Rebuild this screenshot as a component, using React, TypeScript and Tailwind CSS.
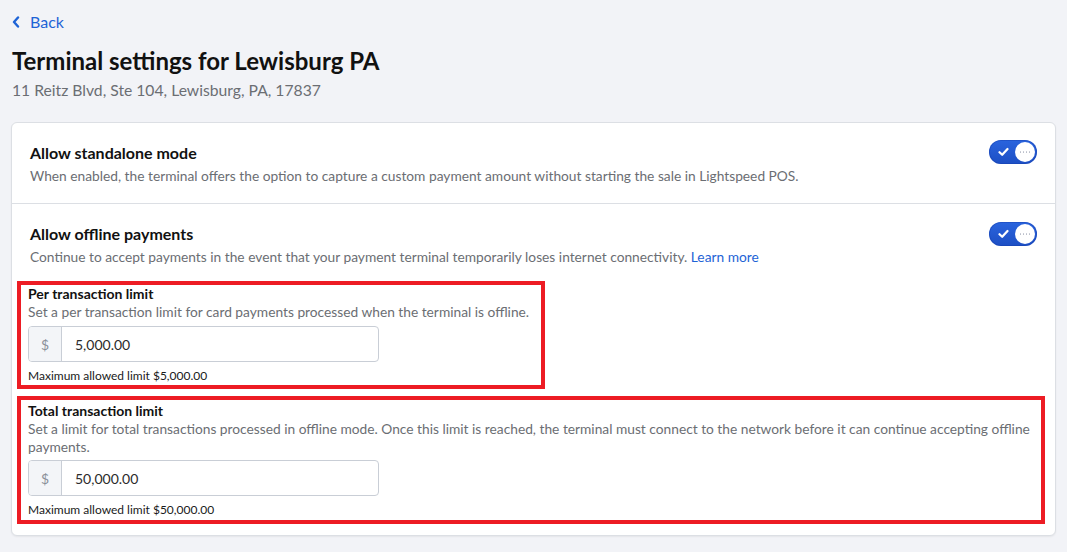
import React from "react";

function Toggle() {
  return (
    <div className="relative h-[24px] w-[48px] shrink-0 rounded-full bg-gradient-to-b from-[#2a64de] to-[#1d4fc4] shadow-[inset_0_0_0_1px_rgba(20,60,170,0.4)]">
      <svg className="absolute left-[9px] top-[7px]" width="11" height="10" viewBox="0 0 11 10" fill="none">
        <path d="M1.5 5.2L4.2 7.8L9.5 2" stroke="white" strokeWidth="2.2" strokeLinecap="round" strokeLinejoin="round" />
      </svg>
      <div className="absolute right-[2px] top-[2px] flex h-[20px] w-[20px] items-center justify-center gap-[1.5px] rounded-full bg-white">
        <span className="h-[1.5px] w-[1.5px] rounded-full bg-[#b8bdc8]" />
        <span className="h-[1.5px] w-[1.5px] rounded-full bg-[#b8bdc8]" />
        <span className="h-[1.5px] w-[1.5px] rounded-full bg-[#b8bdc8]" />
        <span className="h-[1.5px] w-[1.5px] rounded-full bg-[#b8bdc8]" />
      </div>
    </div>
  );
}

function MoneyInput({ value }: { value: string }) {
  return (
    <div className="flex h-[36px] w-[351px] overflow-hidden rounded-[4px] border border-[#c9ced6] bg-white">
      <div className="flex w-[33px] items-center justify-center border-r border-[#c9ced6] bg-[#f3f5f8] text-[14px] text-[#8a9099]">
        $
      </div>
      <div className="flex items-center pl-[13px] text-[14px] text-[#2b2b2b]">{value}</div>
    </div>
  );
}

export default function App() {
  return (
    <div
      className="min-h-[552px] w-full bg-[#f2f3f7] px-[11px] pt-[12px]"
      style={{ fontFamily: "Lato, 'Noto Sans', sans-serif" }}
    >
      <div className="flex h-[20px] items-center gap-[10px] pl-[1px] text-[16px] text-[#1e63d6]">
        <svg width="8" height="12" viewBox="0 0 8 12" fill="none">
          <path d="M6 1.5L2 6L6 10.5" stroke="#1e63d6" strokeWidth="2.4" strokeLinecap="round" strokeLinejoin="round" />
        </svg>
        <span>Back</span>
      </div>
      <h1 className="mt-[13px] pl-[1px] text-[24px] font-bold leading-[32px] text-[#111111]">
        Terminal settings for Lewisburg PA
      </h1>
      <div className="mt-[3px] pl-[1px] text-[15.7px] leading-[20px] text-[#6b6e73]">
        11 Reitz Blvd, Ste 104, Lewisburg, PA, 17837
      </div>

      <div className="mt-[22px] w-[1045px] rounded-[6px] border border-[#dcdfe4] bg-white shadow-[0_1px_2px_rgba(0,0,0,0.06)]">
        <div className="flex items-start justify-between border-b border-[#dcdfe4] px-[18px] pb-[17px] pt-[20px]">
          <div>
            <div className="text-[16px] font-bold leading-[20px] text-[#111111]">Allow standalone mode</div>
            <div className="mt-[3px] text-[13.75px] leading-[20px] text-[#6b6e73]">
              When enabled, the terminal offers the option to capture a custom payment amount without starting the sale in Lightspeed POS.
            </div>
          </div>
          <div className="mt-[-3px]">
            <Toggle />
          </div>
        </div>

        <div className="px-[18px] pb-[11px] pt-[20px]">
          <div className="flex items-start justify-between">
            <div>
              <div className="text-[16px] font-bold leading-[20px] text-[#111111]">Allow offline payments</div>
              <div className="mt-[3px] text-[13.75px] leading-[20px] text-[#6b6e73]">
                Continue to accept payments in the event that your payment terminal temporarily loses internet connectivity.{" "}
                <span className="text-[#1e63d6]">Learn more</span>
              </div>
            </div>
            <div className="mt-[-2px]">
              <Toggle />
            </div>
          </div>

          <div className="ml-[-13px] mt-[14px] w-[528px] border-[4px] border-[#ed1c24] pb-[2px] pl-[7px] pr-[2px] pt-0">
            <div className="text-[14px] font-bold leading-[18px] text-[#111111]">Per transaction limit</div>
            <div className="text-[13.75px] leading-[18px] text-[#6b6e73]">
              Set a per transaction limit for card payments processed when the terminal is offline.
            </div>
            <div className="mt-[5px]">
              <MoneyInput value="5,000.00" />
            </div>
            <div className="mt-[6px] text-[12px] leading-[15px] text-[#1a1a1a]">Maximum allowed limit $5,000.00</div>
          </div>

          <div className="ml-[-13px] mt-[7px] w-[1028px] border-[4px] border-[#ed1c24] pb-[3px] pl-[7px] pr-[2px] pt-[2px]">
            <div className="text-[14px] font-bold leading-[18px] text-[#111111]">Total transaction limit</div>
            <div className="text-[13.75px] leading-[18px] text-[#6b6e73]">
              Set a limit for total transactions processed in offline mode. Once this limit is reached, the terminal must connect to the network before it can continue accepting offline payments.
            </div>
            <div className="mt-[4px]">
              <MoneyInput value="50,000.00" />
            </div>
            <div className="mt-[6px] text-[12px] leading-[15px] text-[#1a1a1a]">Maximum allowed limit $50,000.00</div>
          </div>
        </div>
      </div>
    </div>
  );
}
